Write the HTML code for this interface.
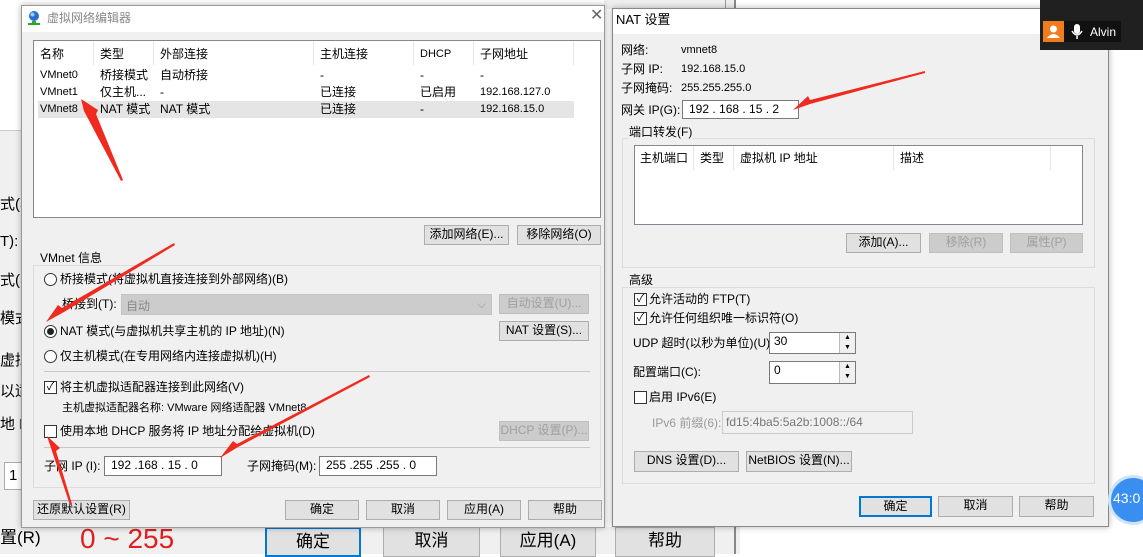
<!DOCTYPE html>
<html><head><meta charset="utf-8"><style>
*{margin:0;padding:0;box-sizing:border-box}
body{width:1143px;height:554px;overflow:hidden;background:#fff;position:relative;font-family:"Liberation Sans","Noto Sans CJK SC",sans-serif;font-size:12px;color:#000}
.a{position:absolute;white-space:nowrap}
.t{position:absolute;white-space:nowrap;line-height:14px}
.btn{position:absolute;background:#e1e1e1;border:1px solid #adadad;text-align:center;line-height:17px;font-size:12px}
.dis{color:#a0a0a0;background:#ccc;border-color:#bfbfbf}
.inp{position:absolute;background:#fff;border:1px solid #7a7a7a;line-height:17px;padding-left:6px}
.grp{position:absolute;border:1px solid #dcdcdc}
.rad{position:absolute;width:13px;height:13px;border:1px solid #333;border-radius:50%;background:#fff}
.chk{position:absolute;width:13px;height:13px;border:1px solid #333;background:#fff;font-size:11px;line-height:11px;text-align:center}
.hd{position:absolute;top:0;height:24px;border-right:1px solid #e5e5e5}
</style></head><body>
<!-- background behind -->
<div class="a" style="left:0;top:130px;width:21px;height:424px;background:#f0f0f0;border-top:1px solid #ccc"></div>
<div class="t" style="left:0;top:198px;font-size:15px;">式(将</div>
<div class="t" style="left:0;top:235px;font-size:15px;">T):</div>
<div class="t" style="left:0;top:274px;font-size:15px;">式(与</div>
<div class="t" style="left:0;top:312px;font-size:15px;">模式</div>
<div class="t" style="left:0;top:354px;font-size:15px;">虚拟</div>
<div class="t" style="left:0;top:385px;font-size:15px;">以适</div>
<div class="t" style="left:0;top:418px;font-size:15px;">地 D</div>
<div class="a" style="left:4px;top:462px;width:20px;height:28px;background:#fff;border:1px solid #aaa;font-size:15px;padding:4px">1</div>
<div class="a" style="left:0;top:527px;width:740px;height:27px;background:#f0f0f0"></div>
<div class="t" style="left:0;top:531px;font-size:17px;">置(R)</div>
<div class="t" style="left:80px;top:524px;font-size:28px;color:#e02020;line-height:30px">0 ~ 255</div>
<div class="btn" style="left:265px;top:527px;width:96px;height:30px;border:2px solid #0078d7;font-size:17px;line-height:26px">确定</div>
<div class="btn" style="left:383px;top:527px;width:97px;height:30px;font-size:17px;line-height:26px">取消</div>
<div class="btn" style="left:500px;top:527px;width:96px;height:30px;font-size:17px;line-height:26px">应用(A)</div>
<div class="btn" style="left:615px;top:527px;width:100px;height:30px;font-size:17px;line-height:26px">帮助</div>
<div class="a" style="left:734px;top:0;width:2px;height:554px;background:#888"></div>
<div class="a" style="left:604px;top:0;width:130px;height:9px;background:#eee"></div>
<div class="a" style="left:725px;top:0;width:1px;height:9px;background:#999"></div>

<!-- left dialog -->
<div class="a" style="left:21px;top:5px;width:584px;height:523px;background:#f0f0f0;border:1px solid #999;box-shadow:0 0 6px rgba(0,0,0,.3)"></div>
<div class="a" style="left:22px;top:6px;width:582px;height:26px;background:#fff"></div>
<svg class="a" style="left:26px;top:10px" width="16" height="16"><circle cx="8" cy="6" r="5" fill="#2a6fd0"/><circle cx="6.5" cy="4.5" r="2" fill="#9cc8ff"/><rect x="6" y="11" width="4" height="2" fill="#3a3"/><rect x="2" y="13" width="12" height="2" fill="#2a2"/></svg>
<div class="t" style="left:47px;top:11px;color:#888">虚拟网络编辑器</div>
<div class="t" style="left:590px;top:9px;font-size:16px;color:#666">✕</div>

<div class="a" style="left:33px;top:40px;width:568px;height:178px;background:#fff;border:1px solid #828790">
 <div class="hd" style="left:0;width:60px"></div><div class="hd" style="left:60px;width:60px"></div><div class="hd" style="left:120px;width:160px"></div><div class="hd" style="left:280px;width:100px"></div><div class="hd" style="left:380px;width:60px"></div><div class="hd" style="left:440px;width:100px"></div>
 <div class="a" style="left:4px;top:60px;width:536px;height:17px;background:#e5e5e5"></div>
</div>
<div class="t" style="left:40px;top:47px">名称</div><div class="t" style="left:100px;top:47px">类型</div><div class="t" style="left:160px;top:47px">外部连接</div><div class="t" style="left:320px;top:47px">主机连接</div><div class="t" style="left:420px;top:47px;font-size:11px">DHCP</div><div class="t" style="left:480px;top:47px">子网地址</div>
<div class="t" style="left:40px;top:68px;font-size:11px">VMnet0</div><div class="t" style="left:100px;top:68px">桥接模式</div><div class="t" style="left:160px;top:68px">自动桥接</div><div class="t" style="left:320px;top:68px">-</div><div class="t" style="left:420px;top:68px">-</div><div class="t" style="left:480px;top:68px">-</div>
<div class="t" style="left:40px;top:85px;font-size:11px">VMnet1</div><div class="t" style="left:100px;top:85px">仅主机...</div><div class="t" style="left:160px;top:85px">-</div><div class="t" style="left:320px;top:85px">已连接</div><div class="t" style="left:420px;top:85px">已启用</div><div class="t" style="left:480px;top:85px;font-size:11px">192.168.127.0</div>
<div class="t" style="left:40px;top:102px;font-size:11px">VMnet8</div><div class="t" style="left:100px;top:102px">NAT 模式</div><div class="t" style="left:160px;top:102px">NAT 模式</div><div class="t" style="left:320px;top:102px">已连接</div><div class="t" style="left:420px;top:102px">-</div><div class="t" style="left:480px;top:102px;font-size:11px">192.168.15.0</div>

<div class="btn" style="left:424px;top:225px;width:85px;height:20px">添加网络(E)...</div>
<div class="btn" style="left:517px;top:225px;width:84px;height:20px">移除网络(O)</div>

<div class="grp" style="left:33px;top:265px;width:568px;height:223px"></div>
<div class="t" style="left:38px;top:251px;background:#f0f0f0;padding:0 2px">VMnet 信息</div>
<div class="rad" style="left:44px;top:273px"></div><div class="t" style="left:60px;top:272px">桥接模式(将虚拟机直接连接到外部网络)(B)</div>
<div class="t" style="left:62px;top:297px">桥接到(T):</div>
<div class="a" style="left:121px;top:294px;width:371px;height:21px;background:#ccc;border:1px solid #c4c4c4;color:#888;padding:2px 4px">自动<span style="position:absolute;right:5px;color:#999">⌵</span></div>
<div class="btn dis" style="left:499px;top:294px;width:90px;height:20px">自动设置(U)...</div>
<div class="rad" style="left:44px;top:325px"><div style="width:7px;height:7px;background:#222;border-radius:50%;margin:2px"></div></div><div class="t" style="left:60px;top:324px">NAT 模式(与虚拟机共享主机的 IP 地址)(N)</div>
<div class="btn" style="left:499px;top:321px;width:90px;height:20px">NAT 设置(S)...</div>
<div class="rad" style="left:44px;top:350px"></div><div class="t" style="left:60px;top:349px">仅主机模式(在专用网络内连接虚拟机)(H)</div>
<div class="a" style="left:44px;top:371px;width:546px;height:1px;background:#c8c8c8"></div>
<div class="chk" style="left:44px;top:381px">✓</div><div class="t" style="left:60px;top:380px">将主机虚拟适配器连接到此网络(V)</div>
<div class="t" style="left:62px;top:401px;font-size:11px">主机虚拟适配器名称: VMware 网络适配器 VMnet8</div>
<div class="chk" style="left:44px;top:425px"></div><div class="t" style="left:60px;top:424px">使用本地 DHCP 服务将 IP 地址分配给虚拟机(D)</div>
<div class="btn dis" style="left:499px;top:421px;width:90px;height:20px">DHCP 设置(P)...</div>
<div class="a" style="left:44px;top:447px;width:546px;height:1px;background:#c8c8c8"></div>
<div class="t" style="left:44px;top:459px">子网 IP (I):</div>
<div class="inp" style="left:104px;top:456px;width:118px;height:20px">192 .168 . 15 . 0</div>
<div class="t" style="left:247px;top:459px">子网掩码(M):</div>
<div class="inp" style="left:319px;top:456px;width:118px;height:20px">255 .255 .255 . 0</div>
<div class="btn" style="left:33px;top:500px;width:97px;height:20px">还原默认设置(R)</div>
<div class="btn" style="left:285px;top:500px;width:74px;height:20px">确定</div>
<div class="btn" style="left:366px;top:500px;width:74px;height:20px">取消</div>
<div class="btn" style="left:447px;top:500px;width:74px;height:20px">应用(A)</div>
<div class="btn" style="left:528px;top:500px;width:74px;height:20px">帮助</div>

<!-- NAT dialog -->
<div class="a" style="left:612px;top:8px;width:497px;height:519px;background:#f0f0f0;border:1px solid #888;box-shadow:0 0 6px rgba(0,0,0,.3)"></div>
<div class="a" style="left:613px;top:9px;width:495px;height:25px;background:#fff"></div>
<div class="t" style="left:616px;top:13px;font-size:13px">NAT 设置</div>
<div class="t" style="left:621px;top:43px">网络:</div><div class="t" style="left:681px;top:43px;font-size:11px">vmnet8</div>
<div class="t" style="left:621px;top:62px">子网 IP:</div><div class="t" style="left:681px;top:62px;font-size:11px">192.168.15.0</div>
<div class="t" style="left:621px;top:81px">子网掩码:</div><div class="t" style="left:681px;top:81px;font-size:11px">255.255.255.0</div>
<div class="t" style="left:621px;top:103px">网关 IP(G):</div>
<div class="inp" style="left:682px;top:100px;width:117px;height:19px">192 . 168 . 15 . 2</div>
<div class="grp" style="left:622px;top:138px;width:473px;height:130px"></div>
<div class="t" style="left:628px;top:125px;background:#f0f0f0;padding:0 1px">端口转发(F)</div>
<div class="a" style="left:634px;top:145px;width:449px;height:80px;background:#fff;border:1px solid #828790">
 <div class="hd" style="left:0;width:59px"></div><div class="hd" style="left:59px;width:40px"></div><div class="hd" style="left:99px;width:160px"></div><div class="hd" style="left:259px;width:157px"></div>
</div>
<div class="t" style="left:640px;top:151px">主机端口</div><div class="t" style="left:700px;top:151px">类型</div><div class="t" style="left:740px;top:151px">虚拟机 IP 地址</div><div class="t" style="left:900px;top:151px">描述</div>
<div class="btn" style="left:846px;top:233px;width:75px;height:20px">添加(A)...</div>
<div class="btn dis" style="left:929px;top:233px;width:74px;height:20px">移除(R)</div>
<div class="btn dis" style="left:1010px;top:233px;width:73px;height:20px">属性(P)</div>
<div class="grp" style="left:622px;top:287px;width:473px;height:197px"></div>
<div class="t" style="left:628px;top:273px;background:#f0f0f0;padding:0 1px">高级</div>
<div class="chk" style="left:634px;top:293px">✓</div><div class="t" style="left:649px;top:292px">允许活动的 FTP(T)</div>
<div class="chk" style="left:634px;top:312px">✓</div><div class="t" style="left:649px;top:311px">允许任何组织唯一标识符(O)</div>
<div class="t" style="left:633px;top:336px">UDP 超时(以秒为单位)(U):</div>
<div class="inp" style="left:769px;top:332px;width:87px;height:22px;padding-left:4px;line-height:16px">30</div>
<div class="a" style="left:839px;top:333px;width:16px;height:20px;background:#f0f0f0;border-left:1px solid #bbb;font-size:7px;line-height:10px;text-align:center">▲<br>▼</div>
<div class="t" style="left:633px;top:365px">配置端口(C):</div>
<div class="inp" style="left:769px;top:361px;width:87px;height:23px;padding-left:4px;line-height:16px">0</div>
<div class="a" style="left:839px;top:362px;width:16px;height:21px;background:#f0f0f0;border-left:1px solid #bbb;font-size:7px;line-height:10px;text-align:center">▲<br>▼</div>
<div class="chk" style="left:634px;top:391px"></div><div class="t" style="left:649px;top:390px">启用 IPv6(E)</div>
<div class="t" style="left:652px;top:416px;color:#999">IPv6 前缀(6):</div>
<div class="a" style="left:722px;top:411px;width:191px;height:23px;background:#f0f0f0;border:1px solid #ccc;color:#777;padding:3px 3px;font-size:12px">fd15:4ba5:5a2b:1008::/64</div>
<div class="btn" style="left:634px;top:451px;width:105px;height:21px">DNS 设置(D)...</div>
<div class="btn" style="left:746px;top:451px;width:106px;height:21px">NetBIOS 设置(N)...</div>
<div class="btn" style="left:859px;top:496px;width:73px;height:21px;border:2px solid #0078d7;line-height:17px">确定</div>
<div class="btn" style="left:938px;top:496px;width:75px;height:21px">取消</div>
<div class="btn" style="left:1019px;top:496px;width:75px;height:21px">帮助</div>

<!-- overlay -->
<div class="a" style="left:1040px;top:0;width:103px;height:50px;background:#202020"></div>
<div class="a" style="left:1043px;top:21px;width:78px;height:21px;background:#111"></div>
<div class="a" style="left:1043px;top:21px;width:21px;height:21px;background:#f07c1c"><svg width="21" height="21"><circle cx="10.5" cy="8" r="3.5" fill="#fff"/><path d="M4 17 Q10.5 9 17 17Z" fill="#fff"/></svg></div>
<svg class="a" style="left:1071px;top:24px" width="12" height="16"><rect x="3" y="0" width="6" height="10" rx="3" fill="#fff"/><path d="M1 7 Q6 15 11 7" stroke="#fff" fill="none" stroke-width="1.5"/><rect x="5.3" y="12" width="1.5" height="3" fill="#fff"/></svg>
<div class="t" style="left:1090px;top:25px;color:#fff;font-size:12px">Alvin</div>
<div class="a" style="left:1108px;top:475px;width:50px;height:50px;border-radius:50%;background:#3a8ef0;border:3px solid #cfe3fb"></div>
<div class="t" style="left:1113px;top:491px;color:#fff;font-size:14px">43:0</div>

<!-- arrows -->
<svg class="a" style="left:0;top:0" width="1143" height="554">
<g fill="#f02a1e">
<polygon points="121,181 84,111 81,99 98,110 96,114 123,180"/>
<polygon points="175,245 64,312 46,322 58,305 62,308 174,243"/>
<polygon points="370,377 238,447 220,458 233,441 237,444 369,375"/>
<polygon points="70,505 52,451 47,436 60,448 56,451 72,504"/>
<polygon points="925,73 810,104 793,110 808,96 810,100 925,71"/>
</g>
</svg>
</body></html>
